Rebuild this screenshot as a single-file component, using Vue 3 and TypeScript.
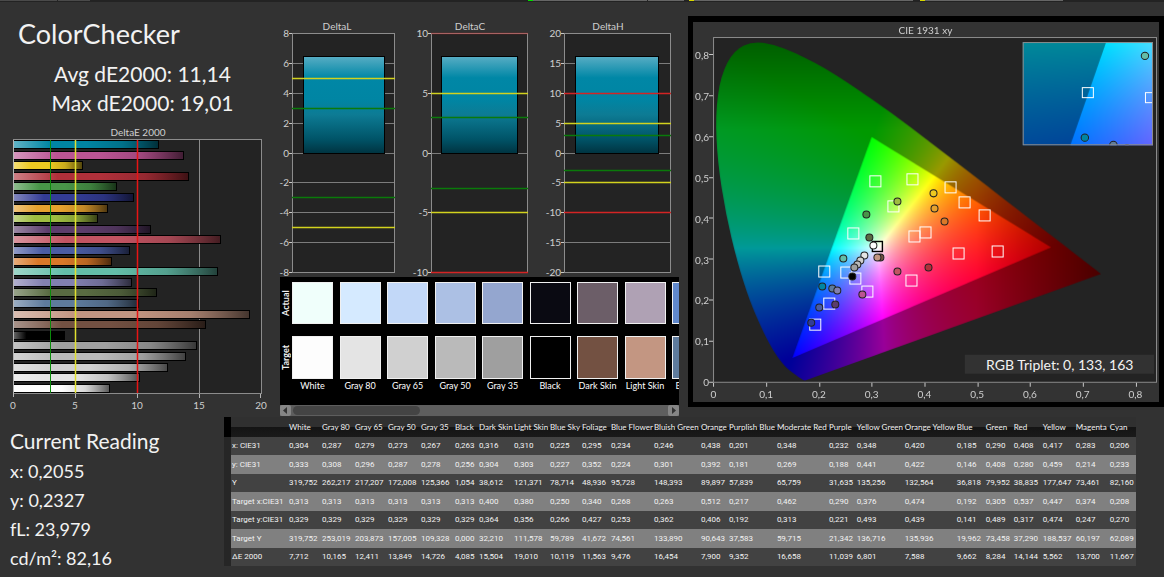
<script setup lang="ts">
import { onMounted, ref } from 'vue'

interface Patch {
  name: string
  target: string
  actual: string
  w: number
  v: [string, string, string, string, string, string, string]
}

const patches: Patch[] = [
  { name: 'White', target: '#fdfdfd', actual: '#f0fffb', w: 33, v: ['0,304', '0,333', '319,752', '0,313', '0,329', '319,752', '7,712'] },
  { name: 'Gray 80', target: '#e4e4e4', actual: '#d5eaff', w: 33, v: ['0,287', '0,308', '262,217', '0,313', '0,329', '253,019', '10,165'] },
  { name: 'Gray 65', target: '#d0d0d0', actual: '#c2d8f8', w: 33, v: ['0,279', '0,296', '217,207', '0,313', '0,329', '203,873', '12,411'] },
  { name: 'Gray 50', target: '#bababa', actual: '#acc0e4', w: 33, v: ['0,273', '0,287', '172,008', '0,313', '0,329', '157,005', '13,849'] },
  { name: 'Gray 35', target: '#9f9f9f', actual: '#94a6cf', w: 34, v: ['0,267', '0,278', '125,366', '0,313', '0,329', '109,328', '14,726'] },
  { name: 'Black', target: '#000000', actual: '#0a0a12', w: 24, v: ['0,263', '0,256', '1,054', '0,313', '0,329', '0,000', '4,085'] },
  { name: 'Dark Skin', target: '#735142', actual: '#6c5e68', w: 35, v: ['0,316', '0,304', '38,612', '0,400', '0,364', '32,210', '15,504'] },
  { name: 'Light Skin', target: '#c39682', actual: '#afa1b4', w: 36, v: ['0,310', '0,303', '121,371', '0,380', '0,356', '111,578', '19,010'] },
  { name: 'Blue Sky', target: '#5e7b9c', actual: '#6088cc', w: 32, v: ['0,225', '0,227', '78,714', '0,250', '0,266', '59,789', '10,119'] },
  { name: 'Foliage', target: '#596b42', actual: '#596b55', w: 29, v: ['0,295', '0,352', '48,936', '0,340', '0,427', '41,672', '11,563'] },
  { name: 'Blue Flower', target: '#8280b0', actual: '#7f88d0', w: 43, v: ['0,234', '0,224', '95,728', '0,268', '0,253', '74,561', '9,476'] },
  { name: 'Bluish Green', target: '#63bda8', actual: '#70c0d0', w: 47, v: ['0,246', '0,301', '148,393', '0,263', '0,362', '133,890', '16,454'] },
  { name: 'Orange', target: '#d97829', actual: '#d08050', w: 28, v: ['0,438', '0,392', '89,897', '0,512', '0,406', '90,643', '7,900'] },
  { name: 'Purplish Blue', target: '#4a5ca3', actual: '#4a68c0', w: 48, v: ['0,201', '0,181', '57,839', '0,217', '0,192', '37,583', '9,352'] },
  { name: 'Moderate Red', target: '#c25462', actual: '#b06080', w: 52, v: ['0,348', '0,269', '65,759', '0,462', '0,313', '59,715', '16,658'] },
  { name: 'Purple', target: '#5c3d6b', actual: '#604888', w: 28, v: ['0,232', '0,188', '31,635', '0,290', '0,221', '21,342', '11,039'] },
  { name: 'Yellow Green', target: '#9fbd40', actual: '#a0c070', w: 48, v: ['0,348', '0,441', '135,256', '0,376', '0,493', '136,716', '6,801'] },
  { name: 'Orange Yellow', target: '#e6a22e', actual: '#d8a850', w: 52, v: ['0,420', '0,422', '132,564', '0,474', '0,439', '135,936', '7,588'] },
  { name: 'Blue', target: '#333c95', actual: '#3048b0', w: 29, v: ['0,185', '0,146', '36,818', '0,192', '0,141', '19,962', '9,662'] },
  { name: 'Green', target: '#489548', actual: '#509870', w: 28, v: ['0,290', '0,408', '79,952', '0,305', '0,489', '73,458', '8,284'] },
  { name: 'Red', target: '#b0303a', actual: '#a04050', w: 29, v: ['0,408', '0,280', '38,835', '0,537', '0,317', '37,290', '14,144'] },
  { name: 'Yellow', target: '#edc921', actual: '#e0d060', w: 33, v: ['0,417', '0,459', '177,647', '0,447', '0,474', '188,537', '5,562'] },
  { name: 'Magenta', target: '#bb5494', actual: '#a860c0', w: 34, v: ['0,283', '0,214', '73,461', '0,374', '0,247', '60,197', '13,700'] },
  { name: 'Cyan', target: '#0085a3', actual: '#2090c0', w: 29, v: ['0,206', '0,233', '82,160', '0,208', '0,270', '62,089', '11,667'] },
]
const rowNames = ['x: CIE31', 'y: CIE31', 'Y', 'Target x:CIE31', 'Target y:CIE31', 'Target Y', 'ΔE 2000']
const tableWidth = 912
const colWidth = (w: number) => `${((w / tableWidth) * 100).toFixed(3)}%`
const num = (s: string) => parseFloat(s.replace(',', '.'))

const readings = ['x: 0,2055', 'y: 0,2327', 'fL: 23,979', 'cd/m²: 82,16']

// DeltaE 2000 bars, last patch on top
function shade(hex: string, toward: number, amount: number) {
  const n = parseInt(hex.slice(1), 16)
  const c = [n >> 16, (n >> 8) & 255, n & 255].map((k) => Math.round(k + (toward - k) * amount))
  return `rgb(${c.join(',')})`
}
const bars = [...patches].reverse().map((p, i) => ({
  id: `bar-${i}`,
  color: p.target,
  light: shade(p.target, 255, 0.38),
  dark: shade(p.target, 0, 0.65),
  y: 140.5 + Math.round(i * 10.6),
  w: Math.round(num(p.v[6]) * 12.4),
}))

// DeltaL / DeltaC / DeltaH
interface Delta {
  title: string
  mid: number
  vx: number
  vw: number
  x: number
  w: number
  bx: number
  bw: number
  max: number
  step: number
}
const deltas: Delta[] = [
  { title: 'DeltaL', mid: 337, vx: 270, vw: 136, x: 292, w: 102, bx: 303, bw: 81, max: 8, step: 2 },
  { title: 'DeltaC', mid: 470, vx: 406, vw: 134, x: 431, w: 96, bx: 441, bw: 76, max: 10, step: 5 },
  { title: 'DeltaH', mid: 608, vx: 540, vw: 148, x: 564, w: 106, bx: 575, bw: 83, max: 20, step: 5 },
]
const ticksOf = (d: Delta) => Array.from({ length: (2 * d.max) / d.step + 1 }, (_, i) => d.max - i * d.step)
const dy = (d: Delta, v: number) => Math.floor(153 - (v / d.max) * 119.5) + 0.5
const limits = [
  { v: 3, c: '#0a7a0a' },
  { v: 5, c: '#d2d21e' },
  { v: 10, c: '#d42424' },
]
const limitsOf = (d: Delta) =>
  limits
    .filter((l) => l.v <= d.max)
    .flatMap((l) => [
      { v: l.v, c: l.c, o: l.v === d.max ? 0.4 : 1 },
      { v: -l.v, c: l.c, o: 1 },
    ])

// Chromaticity diagram
const px = (x: number) => 714.3 + 526.5 * x
const py = (y: number) => 381.5 - 408 * y
const markX = (x: number) => Math.round(px(x))
const markY = (y: number) => Math.round(381.3 - 409.5 * y)
const ix = (x: number) => 1088 + (x - 0.208) * 1500
const iy = (y: number) => 93 - (y - 0.27) * 1200
const cieX = [0, 1, 2, 3, 4, 5, 6, 7, 8]
const tickLabel = (n: number) => (n === 0 ? '0' : `0,${n}`)
const targets = patches
  .slice(6)
  .map((p) => ({ x: num(p.v[3]), y: num(p.v[4]) }))
const actuals = patches.map((p) => ({ x: num(p.v[0]), y: num(p.v[1]), c: p.target }))

const locus: [number, number][] = [
  [0.1741, 0.005], [0.1714, 0.0051], [0.1689, 0.0069], [0.1644, 0.0109], [0.1566, 0.0177], [0.144, 0.0297],
  [0.1355, 0.0399], [0.1241, 0.0578], [0.1096, 0.0868], [0.0913, 0.1327], [0.0687, 0.2007], [0.0454, 0.295],
  [0.0235, 0.4127], [0.0082, 0.5384], [0.0039, 0.6548], [0.0139, 0.7502], [0.0389, 0.812], [0.0743, 0.8338],
  [0.1142, 0.8262], [0.1547, 0.8059], [0.1929, 0.7816], [0.2296, 0.7543], [0.3016, 0.6923], [0.3731, 0.6245],
  [0.4441, 0.5547], [0.5125, 0.4866], [0.5752, 0.4242], [0.627, 0.3725], [0.6658, 0.334], [0.6915, 0.3083],
  [0.719, 0.2809], [0.7347, 0.2653],
]
const gamut: [number, number][] = [[0.64, 0.33], [0.3, 0.6], [0.15, 0.06]]

const originX = 694
const originY = 22
const mapW = 465
const mapH = 379
const map = ref<HTMLCanvasElement | null>(null)

function colourAt(x: number, y: number): [number, number, number] {
  const yy = Math.max(y, 0.001)
  const X = x / yy
  const Z = (1 - x - yy) / yy
  const lin = [
    3.2406 * X - 1.5372 - 0.4986 * Z,
    -0.9689 * X + 1.8758 + 0.0415 * Z,
    0.0557 * X - 0.204 + 1.057 * Z,
  ].map((k) => Math.max(k, 0))
  const top = Math.max(...lin, 1e-6)
  let f = 1
  if (x > 0.5) f -= (x - 0.5) * 2.2
  if (y > 0.62) f -= (y - 0.62) * 1.8
  const out = lin.map((k) => (255 * f * k) / top)
  return [out[0], out[1], out[2]]
}

type Axis = (n: number) => number

function paint(ctx: CanvasRenderingContext2D, w: number, h: number, ux: Axis, uy: Axis, fx: Axis, fy: Axis) {
  const layer = (dim: number, outline: [number, number][]) => {
    const c = document.createElement('canvas')
    c.width = w
    c.height = h
    const g = c.getContext('2d')!
    const img = g.createImageData(w, h)
    for (let j = 0; j < h; j++) {
      for (let i = 0; i < w; i++) {
        const rgb = colourAt(ux(i + 0.5), uy(j + 0.5))
        const o = (j * w + i) * 4
        img.data[o] = rgb[0] * dim
        img.data[o + 1] = rgb[1] * dim
        img.data[o + 2] = rgb[2] * dim
        img.data[o + 3] = 255
      }
    }
    g.putImageData(img, 0, 0)
    g.globalCompositeOperation = 'destination-in'
    g.beginPath()
    outline.forEach(([x, y], i) => {
      const next = outline[Math.min(i + 1, outline.length - 1)]
      if (i === 0) g.moveTo(fx(x), fy(y))
      else if (outline.length > 3) g.quadraticCurveTo(fx(x), fy(y), fx((x + next[0]) / 2), fy((y + next[1]) / 2))
      else g.lineTo(fx(x), fy(y))
    })
    g.closePath()
    g.fill()
    return c
  }
  ctx.drawImage(layer(0.6, locus), 0, 0)
  ctx.drawImage(layer(1, gamut), 0, 0)
}

onMounted(() => {
  const a = map.value?.getContext('2d')
  if (!a) return
  a.fillStyle = '#232323'
  a.fillRect(20, 15, 443, 345)
  paint(
    a, mapW, mapH,
    (i) => (i + originX - 714.3) / 526.5,
    (j) => (381.5 - j - originY) / 408,
    (x) => px(x) - originX,
    (y) => py(y) - originY,
  )
  // magnified neighbourhood of the selected patch
  const detail = document.createElement('canvas')
  detail.width = 130
  detail.height = 103
  paint(
    detail.getContext('2d')!, 130, 103,
    (i) => (i + 1023 - 1088) / 1500 + 0.208,
    (j) => 0.27 - (j + 42 - 93) / 1200,
    (x) => ix(x) - 1023,
    (y) => iy(y) - 42,
  )
  a.drawImage(detail, 1023 - originX, 42 - originY)
})
</script>

<template>
  <main class="app">
    <div class="strip">
      <i class="s1"></i><i class="s2"></i><i class="gap"></i><i class="green"></i><i class="s3"></i><i class="s4"></i>
      <i class="yellow"></i><i class="s5"></i><i class="yellow"></i><i class="s6"></i><i class="rest"></i>
    </div>

    <div class="top">
      <section class="summary">
        <h1>ColorChecker</h1>
        <p class="stat">Avg dE2000: 11,14</p>
        <p class="stat">Max dE2000: 19,01</p>
        <svg viewBox="0 124 270 290" role="img" aria-label="DeltaE 2000 by patch">
          <defs>
            <linearGradient v-for="b in bars" :id="b.id" :key="b.id">
              <stop offset="0" :stop-color="b.light" />
              <stop offset="0.25" :stop-color="b.color" />
              <stop offset="0.5" :stop-color="b.color" />
              <stop offset="0.75" :stop-color="b.color" stop-opacity="0.85" />
              <stop offset="1" :stop-color="b.dark" />
            </linearGradient>
          </defs>
          <text x="138" y="136" class="mid">DeltaE 2000</text>
          <rect x="13.5" y="139.5" width="248" height="254" fill="#232323" stroke="#8c8c8c" />
          <path d="M75.5 140V393M137.5 140V393M199.5 140V393" stroke="#8c8c8c" />
          <g v-for="b in bars" :key="b.id">
            <rect x="14" :y="b.y - 0.5" :width="b.w" height="9" fill="#000" />
            <rect x="14" :y="b.y + 0.5" :width="b.w - 1" height="7" :fill="`url(#${b.id})`" />
          </g>
          <path d="M50.5 140V393" stroke="#0a8a0a" />
          <path d="M75.5 140V393" stroke="#e0e030" stroke-width="1.5" />
          <path d="M137.5 140V393" stroke="#e81414" stroke-width="1.5" />
          <path d="M13.5 140V397M75.5 394V398M137.5 394V398M199.5 394V398M260.5 394V398" stroke="#b4b4b4" />
          <text v-for="n in 5" :key="n" :x="13 + (n - 1) * 62" y="409" class="mid">{{ (n - 1) * 5 }}</text>
        </svg>
      </section>

      <section class="centre">
        <div class="deltas">
          <svg v-for="d in deltas" :key="d.title" :viewBox="`${d.vx} 16 ${d.vw} 261`" role="img" :aria-label="d.title">
            <defs>
              <linearGradient :id="d.title" x1="0" y1="0" x2="0" y2="1">
                <stop offset="0" stop-color="#58adc4" />
                <stop offset="0.22" stop-color="#0087a6" />
                <stop offset="0.45" stop-color="#0085a3" />
                <stop offset="0.6" stop-color="#0d7b94" />
                <stop offset="0.85" stop-color="#005468" />
                <stop offset="1" stop-color="#003340" />
              </linearGradient>
            </defs>
            <text :x="d.mid" y="30" class="mid">{{ d.title }}</text>
            <rect :x="d.x + 0.5" y="33.5" :width="d.w" height="239" fill="#232323" />
            <g v-for="t in ticksOf(d)" :key="t">
              <path :d="`M${d.x} ${dy(d, t)}h${d.w}`" stroke="#7c7c7c" />
              <path :d="`M${d.x - 3} ${dy(d, t)}h3`" stroke="#c8c8c8" />
              <text :x="d.x - 3" :y="dy(d, t) + 3.5" class="end">{{ t }}</text>
            </g>
            <rect :x="d.x + 0.5" y="33.5" :width="d.w" height="239" fill="none" stroke="#8c8c8c" />
            <rect :x="d.bx + 0.5" y="56.5" :width="d.bw" height="97" :fill="`url(#${d.title})`" stroke="#000" />
            <path
              v-for="l in limitsOf(d)"
              :key="l.v"
              :d="`M${d.x} ${dy(d, l.v)}h${d.w + 1}`"
              :stroke="l.c"
              :stroke-opacity="l.o"
              stroke-width="1.5"
            />
          </svg>
        </div>

        <div class="swatches">
          <div class="side"><span>Actual</span><span>Target</span></div>
          <div class="cells">
            <figure v-for="p in patches.slice(0, 9)" :key="p.name">
              <div class="chip" :style="{ background: p.actual }"></div>
              <div class="chip target" :style="{ background: p.target }"></div>
              <figcaption>{{ p.name }}</figcaption>
            </figure>
          </div>
        </div>
        <div class="scroll">
          <button type="button" aria-label="Scroll left"><svg viewBox="0 0 11 11"><path d="M7 2v7L3 5.5z" fill="#333" /></svg></button>
          <div class="track"><div class="thumb"></div></div>
          <button type="button" aria-label="Scroll right"><svg viewBox="0 0 11 11"><path d="M4 2v7l4-3.5z" fill="#333" /></svg></button>
        </div>
      </section>

      <section class="cie">
        <canvas ref="map" :width="mapW" :height="mapH"></canvas>
        <svg viewBox="694 22 465 379" role="img" aria-label="CIE 1931 xy chromaticity diagram">
          <defs>
            <clipPath id="insetClip"><rect x="1023" y="42" width="130" height="103" /></clipPath>
          </defs>
          <text x="926" y="34" class="mid">CIE 1931 xy</text>
          <rect x="714.5" y="37.5" width="442" height="344" fill="none" stroke="#8c8c8c" />
          <g v-for="n in cieX" :key="n">
            <path :d="`M${Math.round(px(n / 10)) + 0.5} 382v4M710 ${Math.round(py(n / 10)) - 0.5}h4`" stroke="#c8c8c8" />
            <text :x="px(n / 10)" y="397" class="mid">{{ tickLabel(n) }}</text>
            <text x="710" :y="py(n / 10) + 4" class="end">{{ tickLabel(n) }}</text>
          </g>
          <rect v-for="(t, i) in targets" :key="`t${i}`" :x="markX(t.x) - 4.5" :y="markY(t.y) - 5.5" width="11" height="11" fill="none" stroke="#fff" />
          <rect x="873" y="241" width="10" height="10" fill="none" stroke="#000" stroke-width="1.4" />
          <circle v-for="(a, i) in actuals" :key="`a${i}`" :cx="markX(a.x)" :cy="markY(a.y)" r="3.5" :fill="a.c" stroke="#222" />
          <g clip-path="url(#insetClip)">
            <rect v-for="(t, i) in targets" :key="`it${i}`" :x="Math.round(ix(t.x)) - 5.5" :y="Math.round(iy(t.y)) - 5.5" width="11" height="10" fill="none" stroke="#fff" />
            <circle v-for="(a, i) in actuals" :key="`ia${i}`" :cx="ix(a.x)" :cy="iy(a.y)" r="3.7" :fill="a.c" stroke="#222" />
          </g>
          <rect x="1023.5" y="42.5" width="129" height="102" fill="none" stroke="#8c8c8c" />
          <rect x="965" y="354" width="189" height="19" fill="#323232" />
          <text x="1060" y="369" class="triplet">RGB Triplet: 0, 133, 163</text>
        </svg>
      </section>
    </div>

    <div class="bottom">
      <section class="reading">
        <h2>Current Reading</h2>
        <p v-for="r in readings" :key="r">{{ r }}</p>
      </section>
      <table>
        <colgroup>
          <col :style="{ width: colWidth(7) }" />
          <col :style="{ width: colWidth(55) }" />
          <col v-for="p in patches" :key="p.name" :style="{ width: colWidth(p.w) }" />
        </colgroup>
        <thead>
          <tr>
            <td class="gutter"></td>
            <td></td>
            <th v-for="p in patches" :key="p.name" scope="col">{{ p.name }}</th>
          </tr>
        </thead>
        <tbody>
          <tr v-for="(r, i) in rowNames" :key="r">
            <td class="gutter"></td>
            <th scope="row">{{ r }}</th>
            <td v-for="p in patches" :key="p.name">{{ p.v[i] }}</td>
          </tr>
        </tbody>
      </table>
    </div>
  </main>
</template>

<style>
html {
  background: #323232;
}
</style>

<style scoped>
.app {
  min-height: 100vh;
  background: #323232;
  color: #f2f2f2;
  font-family: Lato, "Open Sans", sans-serif;
  overflow: hidden;
}
h1,
h2,
p,
figure {
  margin: 0;
  font-weight: 400;
}
svg,
canvas {
  display: block;
  width: 100%;
  height: auto;
}
svg text {
  fill: #cfcfcf;
  font-size: 10px;
}
.mid,
svg .triplet {
  text-anchor: middle;
}
.end {
  text-anchor: end;
}
svg .triplet {
  fill: #f2f2f2;
  font-size: 14px;
}
.strip {
  display: flex;
  height: 1px;
  background: #232323;
  border-bottom: 1px solid #232323;
}
.strip i {
  background: #666;
  margin-right: 1px;
}
.strip .s1 { flex: 57; background: #4a4a4a; }
.strip .s2 { flex: 32; background: #4a4a4a; }
.strip .gap { flex: 436; background: #232323; }
.strip .green { flex: 5; background: #00e000; margin: 0; }
.strip .s3 { flex: 113; }
.strip .s4 { flex: 36; margin-right: 5px; }
.strip .yellow { flex: 5; background: #d8d800; margin: 0; }
.strip .s5 { flex: 219; margin-right: 7px; }
.strip .s6 { flex: 138; }
.strip .rest { flex: 100; background: #232323; margin: 0; }

.top {
  display: grid;
  grid-template-columns: 270fr 418fr 476fr;
  align-items: start;
  padding-top: 14px;
}
h1 {
  padding-left: 18px;
  font-size: 27px;
  line-height: 36px;
  margin-bottom: 7px;
}
.stat {
  padding-left: 15px;
  text-align: center;
  font-size: 21px;
  line-height: 29px;
}
.summary svg {
  margin-top: 7px;
}
.deltas {
  display: grid;
  grid-template-columns: 136fr 134fr 148fr;
}
.swatches {
  display: flex;
  height: 128px;
  margin: 0 9px 0 10px;
  background: #000;
}
.side {
  display: flex;
  flex: none;
  flex-direction: column;
  gap: 12px;
  width: 12px;
  padding-top: 5px;
}
.side span {
  height: 42px;
  writing-mode: vertical-rl;
  rotate: 180deg;
  text-align: center;
  font-size: 9px;
  font-weight: 700;
  line-height: 12px;
}
.cells {
  display: flex;
  flex: 1;
  min-width: 0;
  overflow: hidden;
  padding-top: 5px;
}
figure {
  flex: 0 0 calc((100% - 7px) / 8);
  min-width: 0;
}
.chip {
  box-sizing: border-box;
  width: 41px;
  height: 42px;
  border: 1px solid #f0f0f0;
}
.chip.target {
  height: 43px;
  margin-top: 12px;
}
figcaption {
  display: flex;
  justify-content: center;
  width: 41px;
  color: #fff;
  font-size: 9px;
  line-height: 13px;
  white-space: nowrap;
}
.scroll {
  display: flex;
  height: 11px;
  margin: 0 9px 0 10px;
  background: #5e5e5e;
}
.scroll button {
  width: 11px;
  height: 11px;
  padding: 0;
  border: 0;
  border-radius: 2px;
  background: #858585;
}
.track {
  flex: 1;
  padding: 1px 2px;
}
.thumb {
  width: 34%;
  height: 9px;
  border-radius: 5px;
  background: #444;
}
.cie {
  display: grid;
  background: #333;
  border: 5px solid #000;
  border-top-width: 6px;
}
.cie > * {
  grid-area: 1 / 1;
}

.bottom {
  display: grid;
  grid-template-columns: 224fr 912fr 28fr;
  align-items: start;
}
.reading {
  padding: 8px 0 0 10px;
}
h2 {
  font-size: 21px;
  line-height: 33px;
}
.reading p {
  font-size: 18px;
  line-height: 29px;
}
table {
  width: 100%;
  margin-top: 1px;
  table-layout: fixed;
  border-collapse: collapse;
  font-family: Roboto, "Open Sans", sans-serif;
  font-size: 8px;
}
th,
td {
  padding: 0 0 0 3px;
  text-align: left;
  font-weight: 400;
  line-height: 18px;
  white-space: nowrap;
}
tbody th {
  padding-left: 1px;
}
thead tr {
  height: 20px;
  background: linear-gradient(#303030 50%, #141414 50%, #1a1a1a);
}
thead th {
  font-family: Lato, "Open Sans", sans-serif;
}
thead .gutter {
  background: #000;
}
tbody tr {
  height: 18px;
  background: #424242;
}
tbody tr:nth-child(even) {
  height: 19px;
  background: #808080;
}
tbody .gutter {
  background: #262626;
}
</style>
